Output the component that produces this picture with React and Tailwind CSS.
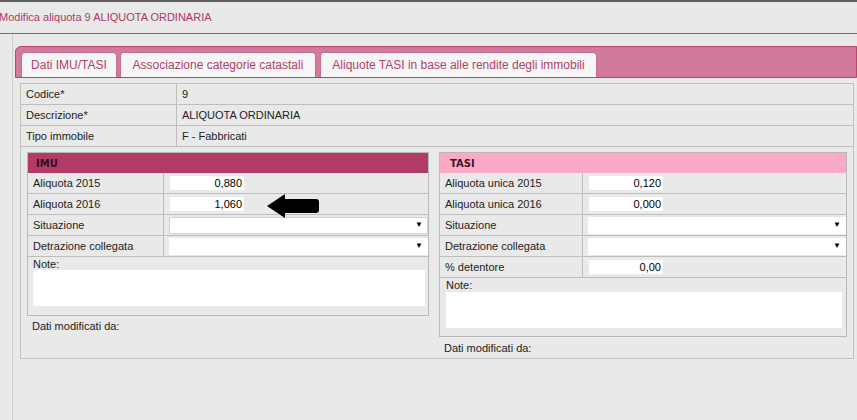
import React from 'react'

const Row = ({ label, labelW, children, last }) => (
  <div className={`flex h-[21px] ${last ? '' : 'border-b border-[#bdbdbd]'}`}>
    <div className={`${labelW} shrink-0 border-r border-[#bdbdbd] pl-[5px] flex items-center`}>{label}</div>
    <div className="flex-1 flex items-center">{children}</div>
  </div>
)

const NumInput = ({ value, w }) => (
  <div className={`${w} ml-[6px] h-[14px] bg-white text-right pr-[2px] leading-[14px] text-[11px] text-black`}>{value}</div>
)

const Select = ({ pink }) => (
  <div
    className={`flex-1 ml-[5px] h-[17px] bg-white flex items-center justify-end pr-[4px] border ${pink ? 'border-[#f0c4ca]' : 'border-white'}`}
  >
    <span className="text-[8px] leading-none text-black">▼</span>
  </div>
)

function App() {
  return (
    <div className="relative w-[857px] h-[420px] overflow-hidden bg-[#e9e9e9] text-[11px] text-[#222] font-['Liberation_Sans',Arial,sans-serif]">
      <div className="h-[2px] bg-[#5c5c5c]" />
      <div className="h-[32px] border-b border-[#c04c72] flex items-center -ml-[1px] text-[11px] text-[#b23861]">
        Modifica aliquota 9 ALIQUOTA ORDINARIA
      </div>

      <div className="ml-[12px] border-l border-[#cfcfcf] pl-[2px] pt-[12px] h-[400px]">
        {/* tab strip */}
        <div className="h-[32px] border border-[#b4466f] rounded-tl-[6px] bg-[#d27a9b] flex items-end pl-[5px] gap-[3px]">
          <div className="w-[96px] h-[25px] bg-[#f6f6f6] rounded-t-[4px] border border-b-0 border-[#c76f92] flex items-center justify-center text-[12px] text-[#b0406a]">
            Dati IMU/TASI
          </div>
          <div className="w-[196px] h-[25px] bg-[#f6f6f6] rounded-t-[4px] border border-b-0 border-[#c76f92] flex items-center justify-center text-[12px] text-[#b0406a]">
            Associazione categorie catastali
          </div>
          <div className="w-[277px] ml-[1px] h-[25px] bg-[#f6f6f6] rounded-t-[4px] border border-b-0 border-[#c76f92] flex items-center justify-center text-[12px] text-[#b0406a]">
            Aliquote TASI in base alle rendite degli immobili
          </div>
        </div>

        {/* content box */}
        <div className="ml-[5px] mt-[5px] w-[834px] border border-[#c2c2c2] pb-[3px]">
          <Row label="Codice*" labelW="w-[156px]">
            <span className="pl-[5px]">9</span>
          </Row>
          <Row label="Descrizione*" labelW="w-[156px]">
            <span className="pl-[5px]">ALIQUOTA ORDINARIA</span>
          </Row>
          <Row label="Tipo immobile" labelW="w-[156px]">
            <span className="pl-[5px]">F - Fabbricati</span>
          </Row>

          <div className="flex items-start pl-[6px] pt-[5px] gap-[10px]">
            {/* IMU */}
            <div className="w-[402px]">
              <div className="border border-[#b8b8b8]">
                <div className="h-[20px] bg-[#b23b68] flex items-center pl-[8px] text-[10px] font-bold text-[#3a0c1f] font-['DejaVu_Sans',Verdana,sans-serif]">
                  IMU
                </div>
                <Row label="Aliquota 2015" labelW="w-[136px]">
                  <NumInput value="0,880" w="w-[74px]" />
                </Row>
                <Row label="Aliquota 2016" labelW="w-[136px]">
                  <NumInput value="1,060" w="w-[74px]" />
                </Row>
                <Row label="Situazione" labelW="w-[136px]">
                  <Select pink />
                </Row>
                <Row label="Detrazione collegata" labelW="w-[136px]">
                  <Select />
                </Row>
                <div className="h-[58px] pl-[5px] pr-[3px]">
                  <div className="leading-[13px] pt-[1px]">Note:</div>
                  <div className="h-[36px] bg-white mt-[-1px]" />
                </div>
              </div>
              <div className="mt-[3px] pl-[5px] leading-[14px]">Dati modificati da:</div>
            </div>

            {/* TASI */}
            <div className="w-[408px]">
              <div className="border border-[#b8b8b8]">
                <div className="h-[20px] bg-[#fba8c9] flex items-center pl-[10px] text-[10px] font-bold text-[#3d1626] font-['DejaVu_Sans',Verdana,sans-serif]">
                  TASI
                </div>
                <Row label="Aliquota unica 2015" labelW="w-[143px]">
                  <NumInput value="0,120" w="w-[74px]" />
                </Row>
                <Row label="Aliquota unica 2016" labelW="w-[143px]">
                  <NumInput value="0,000" w="w-[74px]" />
                </Row>
                <Row label="Situazione" labelW="w-[143px]">
                  <Select />
                </Row>
                <Row label="Detrazione collegata" labelW="w-[143px]">
                  <Select />
                </Row>
                <Row label="% detentore" labelW="w-[143px]">
                  <NumInput value="0,00" w="w-[74px]" />
                </Row>
                <div className="h-[58px] pl-[6px] pr-[4px]">
                  <div className="leading-[13px] pt-[1px]">Note:</div>
                  <div className="h-[36px] bg-white mt-[0px]" />
                </div>
              </div>
              <div className="mt-[4px] pl-[5px] leading-[14px]">Dati modificati da:</div>
            </div>
          </div>
        </div>
      </div>

      {/* black arrow annotation */}
      <svg className="absolute left-[266px] top-[193px]" width="54" height="26" viewBox="0 0 54 26">
        <path d="M1 13 L19 1 L19 6 L50 6 Q53 6 53 9 L53 17 Q53 20 50 20 L19 20 L19 25 Z" fill="#000" />
      </svg>
    </div>
  )
}

export default App
